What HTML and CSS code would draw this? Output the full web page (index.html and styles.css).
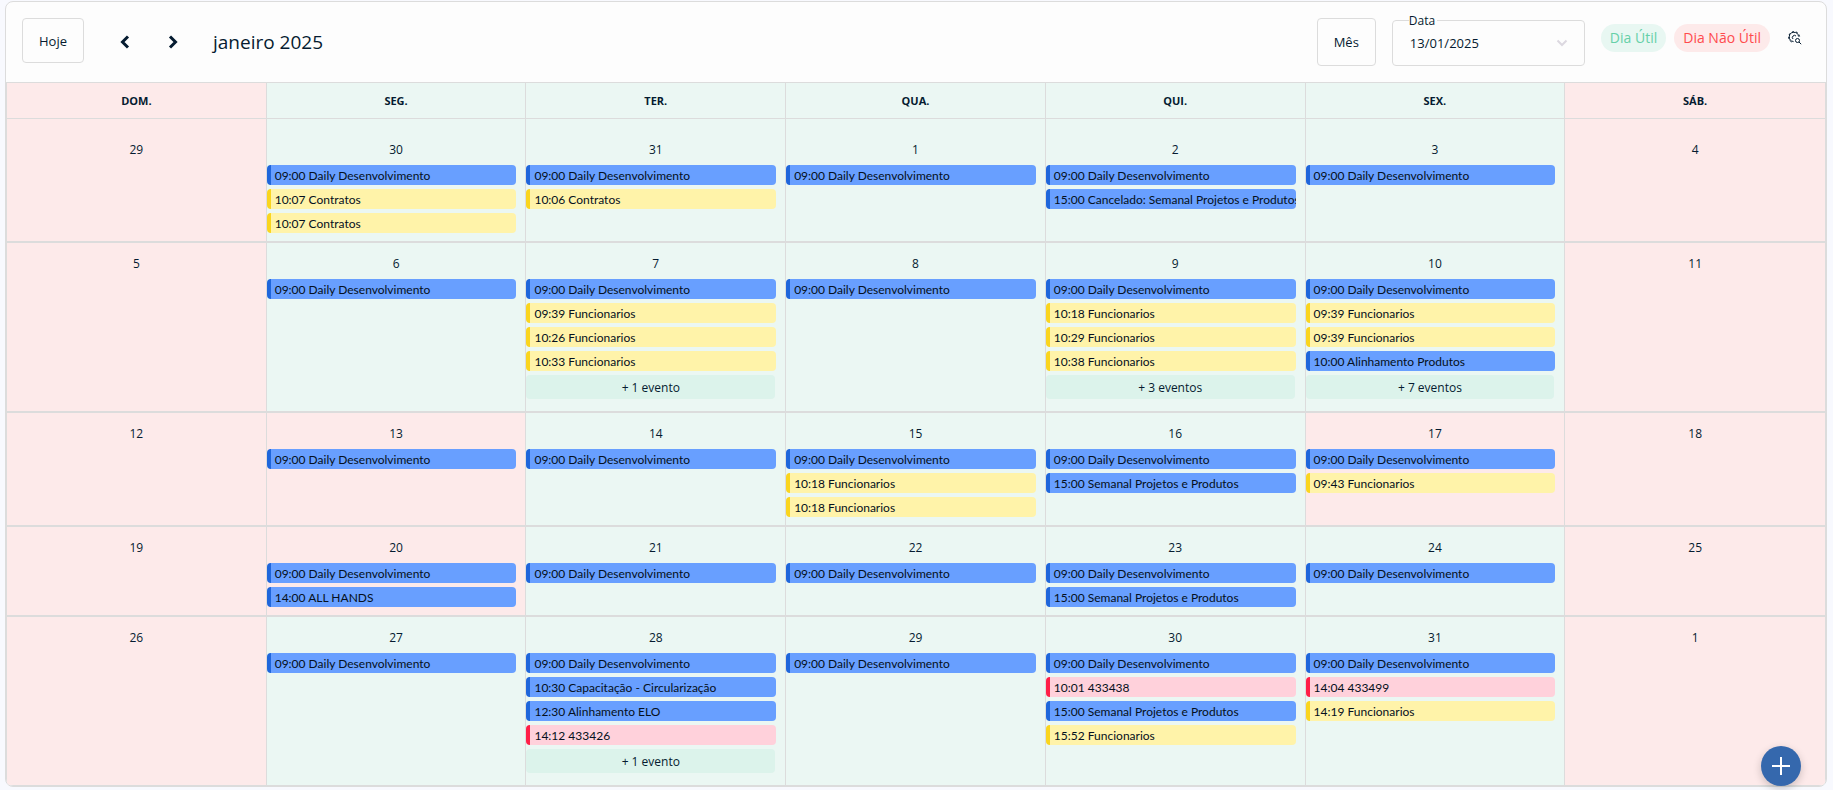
FILE: index.html
```html
<!DOCTYPE html>
<html lang="pt-BR">

<head>
    <meta charset="UTF-8">
    <meta name="viewport" content="width=device-width, initial-scale=1.0">
    <title>Calendário</title>
    <link rel="stylesheet" href="styles.css">
</head>

<body>
    <main class="card">
        <header class="toolbar">
            <button class="btn" type="button">Hoje</button>
            <div class="arrows">
                <button class="arrow" type="button" aria-label="Mês anterior">
                    <svg width="10" height="14" viewBox="0 0 10 14"><path d="M8 1.5L2.5 7L8 12.5" /></svg>
                </button>
                <button class="arrow" type="button" aria-label="Próximo mês">
                    <svg width="10" height="14" viewBox="0 0 10 14"><path d="M2 1.5L7.5 7L2 12.5" /></svg>
                </button>
            </div>
            <h1 class="title">janeiro 2025</h1>
            <button class="btn btn-view" type="button">Mês</button>
            <div class="field">
                <label class="field-label" for="data">Data</label>
                <input class="field-input" id="data" type="text" value="13/01/2025">
                <svg class="field-icon" width="12" height="8" viewBox="0 0 12 8"><path d="M1.5 1.5L6 6L10.5 1.5" /></svg>
            </div>
            <div class="legend">
                <span class="tag tag-green">Dia Útil</span>
                <span class="tag tag-red">Dia Não Útil</span>
                <button class="settings" type="button" aria-label="Configurações">
                    <svg width="14" height="14" viewBox="0 0 14 14">
                        <path class="teeth" d="M11.6 5.5A5.5 5.5 0 1 0 5.5 11.6" />
                        <path d="M10.5 5.5A4.6 4.6 0 1 0 5.5 10.5" />
                        <path d="M8 5A2 2 0 1 0 5 8" />
                        <circle cx="9.5" cy="9.5" r="2" />
                        <path d="M11 11L13.2 13.2" />
                    </svg>
                </button>
            </div>
        </header>
        <div class="calendar">
            <div class="week week-head">
                <div class="day off">dom.</div>
                <div class="day">seg.</div>
                <div class="day">ter.</div>
                <div class="day">qua.</div>
                <div class="day">qui.</div>
                <div class="day">sex.</div>
                <div class="day off">sáb.</div>
            </div>
            <div class="week week-first">
                <div class="day off"><span class="num">29</span></div>
                <div class="day"><span class="num">30</span>
                    <div class="event blue">09:00 Daily Desenvolvimento</div>
                    <div class="event yellow">10:07 Contratos</div>
                    <div class="event yellow">10:07 Contratos</div>
                </div>
                <div class="day"><span class="num">31</span>
                    <div class="event blue">09:00 Daily Desenvolvimento</div>
                    <div class="event yellow">10:06 Contratos</div>
                </div>
                <div class="day"><span class="num">1</span>
                    <div class="event blue">09:00 Daily Desenvolvimento</div>
                </div>
                <div class="day"><span class="num">2</span>
                    <div class="event blue">09:00 Daily Desenvolvimento</div>
                    <div class="event blue">15:00 Cancelado: Semanal Projetos e Produtos</div>
                </div>
                <div class="day"><span class="num">3</span>
                    <div class="event blue">09:00 Daily Desenvolvimento</div>
                </div>
                <div class="day off"><span class="num">4</span></div>
            </div>
            <div class="week">
                <div class="day off"><span class="num">5</span></div>
                <div class="day"><span class="num">6</span>
                    <div class="event blue">09:00 Daily Desenvolvimento</div>
                </div>
                <div class="day"><span class="num">7</span>
                    <div class="event blue">09:00 Daily Desenvolvimento</div>
                    <div class="event yellow">09:39 Funcionarios</div>
                    <div class="event yellow">10:26 Funcionarios</div>
                    <div class="event yellow">10:33 Funcionarios</div>
                    <button class="more" type="button">+ 1 evento</button>
                </div>
                <div class="day"><span class="num">8</span>
                    <div class="event blue">09:00 Daily Desenvolvimento</div>
                </div>
                <div class="day"><span class="num">9</span>
                    <div class="event blue">09:00 Daily Desenvolvimento</div>
                    <div class="event yellow">10:18 Funcionarios</div>
                    <div class="event yellow">10:29 Funcionarios</div>
                    <div class="event yellow">10:38 Funcionarios</div>
                    <button class="more" type="button">+ 3 eventos</button>
                </div>
                <div class="day"><span class="num">10</span>
                    <div class="event blue">09:00 Daily Desenvolvimento</div>
                    <div class="event yellow">09:39 Funcionarios</div>
                    <div class="event yellow">09:39 Funcionarios</div>
                    <div class="event blue">10:00 Alinhamento Produtos</div>
                    <button class="more" type="button">+ 7 eventos</button>
                </div>
                <div class="day off"><span class="num">11</span></div>
            </div>
            <div class="week">
                <div class="day off"><span class="num">12</span></div>
                <div class="day off"><span class="num">13</span>
                    <div class="event blue">09:00 Daily Desenvolvimento</div>
                </div>
                <div class="day"><span class="num">14</span>
                    <div class="event blue">09:00 Daily Desenvolvimento</div>
                </div>
                <div class="day"><span class="num">15</span>
                    <div class="event blue">09:00 Daily Desenvolvimento</div>
                    <div class="event yellow">10:18 Funcionarios</div>
                    <div class="event yellow">10:18 Funcionarios</div>
                </div>
                <div class="day"><span class="num">16</span>
                    <div class="event blue">09:00 Daily Desenvolvimento</div>
                    <div class="event blue">15:00 Semanal Projetos e Produtos</div>
                </div>
                <div class="day off"><span class="num">17</span>
                    <div class="event blue">09:00 Daily Desenvolvimento</div>
                    <div class="event yellow">09:43 Funcionarios</div>
                </div>
                <div class="day off"><span class="num">18</span></div>
            </div>
            <div class="week">
                <div class="day off"><span class="num">19</span></div>
                <div class="day off"><span class="num">20</span>
                    <div class="event blue">09:00 Daily Desenvolvimento</div>
                    <div class="event blue">14:00 ALL HANDS</div>
                </div>
                <div class="day"><span class="num">21</span>
                    <div class="event blue">09:00 Daily Desenvolvimento</div>
                </div>
                <div class="day"><span class="num">22</span>
                    <div class="event blue">09:00 Daily Desenvolvimento</div>
                </div>
                <div class="day"><span class="num">23</span>
                    <div class="event blue">09:00 Daily Desenvolvimento</div>
                    <div class="event blue">15:00 Semanal Projetos e Produtos</div>
                </div>
                <div class="day"><span class="num">24</span>
                    <div class="event blue">09:00 Daily Desenvolvimento</div>
                </div>
                <div class="day off"><span class="num">25</span></div>
            </div>
            <div class="week">
                <div class="day off"><span class="num">26</span></div>
                <div class="day"><span class="num">27</span>
                    <div class="event blue">09:00 Daily Desenvolvimento</div>
                </div>
                <div class="day"><span class="num">28</span>
                    <div class="event blue">09:00 Daily Desenvolvimento</div>
                    <div class="event blue">10:30 Capacitação - Circularização</div>
                    <div class="event blue">12:30 Alinhamento ELO</div>
                    <div class="event red">14:12 433426</div>
                    <button class="more" type="button">+ 1 evento</button>
                </div>
                <div class="day"><span class="num">29</span>
                    <div class="event blue">09:00 Daily Desenvolvimento</div>
                </div>
                <div class="day"><span class="num">30</span>
                    <div class="event blue">09:00 Daily Desenvolvimento</div>
                    <div class="event red">10:01 433438</div>
                    <div class="event blue">15:00 Semanal Projetos e Produtos</div>
                    <div class="event yellow">15:52 Funcionarios</div>
                </div>
                <div class="day"><span class="num">31</span>
                    <div class="event blue">09:00 Daily Desenvolvimento</div>
                    <div class="event red">14:04 433499</div>
                    <div class="event yellow">14:19 Funcionarios</div>
                </div>
                <div class="day off"><span class="num">1</span></div>
            </div>
        </div>
    </main>
    <button class="add" type="button" aria-label="Adicionar evento">
        <svg width="18" height="18" viewBox="0 0 18 18"><path d="M9 0V18M0 9H18" /></svg>
    </button>
</body>

</html>
```
FILE: styles.css
```css
* {
    box-sizing: border-box;
}

body {
    margin: 0;
    padding: 1px 6px 2px 5px;
    background-color: #f8f9fe;
    color: #051b30;
    font-family: "Open Sans", "Noto Sans", sans-serif;
    font-size: 12px;
}

button,
input {
    font-family: inherit;
    color: inherit;
}

button {
    padding: 0;
    border: none;
    background: none;
    cursor: pointer;
}

svg {
    display: block;
    fill: none;
    stroke: currentColor;
}

.card {
    background-color: #fdfdfd;
    border: 1px solid #dcdcdc;
    border-radius: 8px;
    overflow: hidden;
}

.toolbar {
    display: flex;
    align-items: flex-start;
    height: 80px;
    padding: 16px 24px 0 16px;
}

.btn {
    height: 45px;
    padding: 0 16px;
    border: 1px solid #dcdcdc;
    border-radius: 4px;
    font-size: 13px;
}

.btn-view {
    height: 48px;
    margin-left: auto;
}

.arrows {
    display: flex;
    gap: 24px;
    margin-left: 29px;
}

.arrow {
    display: flex;
    align-items: center;
    justify-content: center;
    width: 24px;
    height: 48px;
}

.arrow svg {
    stroke-width: 3;
}

.title {
    margin: 0 0 0 28px;
    font-size: 19px;
    font-weight: 400;
    line-height: 48px;
}

.field {
    position: relative;
    width: 193px;
    height: 46px;
    margin: 2px 0 0 16px;
}

.field-label {
    position: absolute;
    top: -7px;
    left: 17px;
    padding-right: 2px;
    background-color: #fdfdfd;
    font-size: 12px;
    line-height: 16px;
}

.field-input {
    width: 100%;
    height: 100%;
    padding: 0 40px 0 17px;
    border: 1px solid #dcdcdc;
    border-radius: 4px;
    background: none;
    font-size: 13px;
}

.field-icon {
    position: absolute;
    top: 19px;
    right: 17px;
    color: #dcd8e0;
    stroke-width: 2;
}

.legend {
    display: flex;
    align-items: center;
    gap: 8px;
    margin: 6px 0 0 16px;
}

.tag {
    padding: 0 9px;
    border-radius: 14px;
    font-size: 14px;
    line-height: 28px;
}

.tag-green {
    background-color: #e8f7f2;
    color: #66d0a8;
}

.tag-red {
    background-color: #fdeaea;
    color: #ff4a4d;
}

.settings {
    margin-left: 10px;
}

.settings .teeth {
    stroke-dasharray: 2 2;
}

.calendar {
    border: 1px solid #dcdcdc;
    border-width: 1px 1px 0;
}

.week {
    display: grid;
    grid-template-columns: repeat(7, minmax(0, 1fr));
    border-bottom: 2px solid #dcdcdc;
}

.week:last-child {
    border-bottom-width: 1px;
}

.day {
    padding-bottom: 4px;
    border-right: 1px solid #dcdcdc;
    background-color: #ebf7f3;
}

.day:last-child {
    border-right: none;
}

.off {
    background-color: #fdeaea;
}

.week-head {
    border-bottom-width: 1px;
}

.week-head .day {
    padding: 0;
    font-size: 11px;
    font-weight: 700;
    line-height: 35px;
    text-align: center;
    text-transform: uppercase;
}

.week-first .day {
    padding-top: 10px;
}

.num {
    display: block;
    padding: 12px 0 6px;
    line-height: 18px;
    text-align: center;
}

.event {
    height: 20px;
    margin: 0 9px 4px 0;
    padding-left: 4px;
    border-left: 4px solid;
    border-radius: 4px;
    color: #051020;
    font-family: Lato, "Open Sans", sans-serif;
    line-height: 22px;
    white-space: nowrap;
    overflow: hidden;
}

.blue {
    background-color: #689fff;
    border-color: #1f66db;
}

.yellow {
    background-color: #fff3a9;
    border-color: #fad51e;
}

.red {
    background-color: #ffd1db;
    border-color: #ff1f48;
}

.more {
    display: block;
    width: calc(100% - 10px);
    height: 24px;
    margin-bottom: 8px;
    border-radius: 4px;
    background-color: #dcf3eb;
    font-size: 12px;
}

.add {
    position: fixed;
    right: 32px;
    bottom: 4px;
    display: flex;
    align-items: center;
    justify-content: center;
    width: 40px;
    height: 40px;
    border-radius: 50%;
    background-color: #3568ad;
    color: #fff;
    box-shadow: 0 3px 8px rgba(0, 0, 0, 0.2);
}

.add svg {
    stroke-width: 2;
}
```
